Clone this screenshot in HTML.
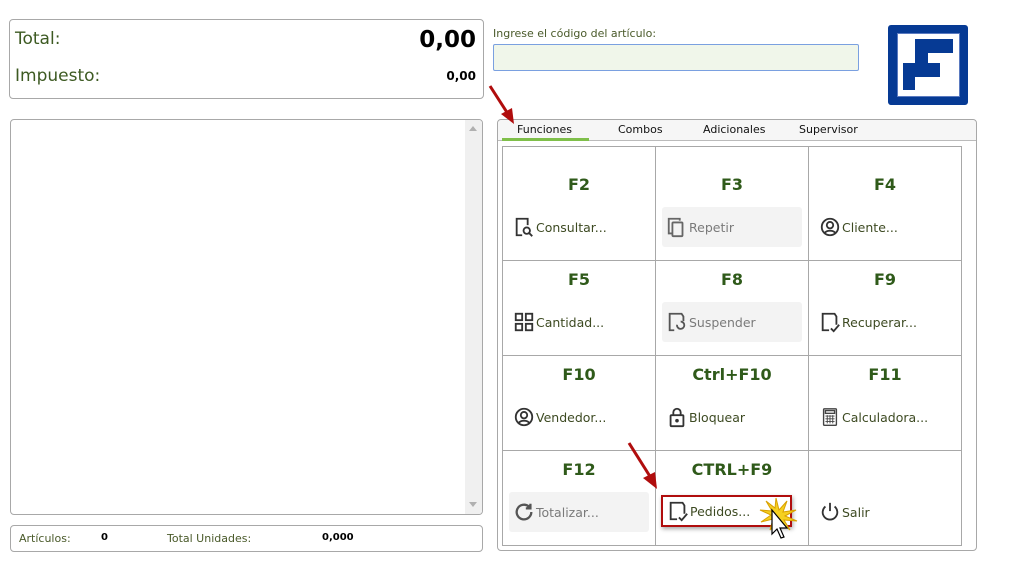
<!DOCTYPE html>
<html><head><meta charset="utf-8"><style>
*{box-sizing:border-box;margin:0;padding:0}
body{width:1024px;height:583px;background:#fff;font-family:"DejaVu Sans","Liberation Sans",sans-serif;position:relative;overflow:hidden;color:#3d4f22}
.a{position:absolute}
.box{border:1px solid #a8a8a8;border-radius:4px;background:#fff}
.fk{position:absolute;left:0;right:0;text-align:center;font-family:"DejaVu Sans",sans-serif;font-weight:bold;font-size:16px;color:#2f5a1a}
.btn{position:absolute;left:6px;right:6px;height:40px;border-radius:3px;display:flex;align-items:center;padding-left:4px;font-size:12.5px;color:#3d4a22}
.btn svg{width:22px;height:22px;margin-right:1px;flex:none}
.dis{background:#f3f3f3;color:#7a7a7a}
.cell{position:absolute;border-right:1px solid #a8a8a8;border-bottom:1px solid #a8a8a8}
</style></head><body>
<div class="a box" style="left:9px;top:19px;width:475px;height:80px"></div>
<div class="a" style="left:15px;top:29px;font-size:17px;color:#3d5a22">Total:</div>
<div class="a" style="right:548px;top:27px;font-size:23px;font-weight:bold;color:#000;font-family:'DejaVu Sans',sans-serif">0,00</div>
<div class="a" style="left:15px;top:66px;font-size:17px;color:#3d5a22">Impuesto:</div>
<div class="a" style="right:548px;top:69px;font-size:12px;font-weight:bold;color:#000">0,00</div>
<div class="a box" style="left:10px;top:119px;width:473px;height:396px;overflow:hidden">
<div class="a" style="right:0;top:0;width:17px;height:100%;background:#f0f0f0"></div>
<div class="a" style="right:5px;top:6px;width:0;height:0;border-left:4px solid transparent;border-right:4px solid transparent;border-bottom:5px solid #b0b0b0"></div>
<div class="a" style="right:5px;bottom:7px;width:0;height:0;border-left:4px solid transparent;border-right:4px solid transparent;border-top:5px solid #b0b0b0"></div>
</div>
<div class="a box" style="left:10px;top:525px;width:473px;height:27px"></div>
<div class="a" style="left:19px;top:532px;font-size:11px;color:#4a5a2a">Artículos:</div>
<div class="a" style="left:101px;top:532px;font-size:10px;font-weight:bold;color:#000">0</div>
<div class="a" style="left:167px;top:532px;font-size:11px;color:#4a5a2a">Total Unidades:</div>
<div class="a" style="left:322px;top:532px;font-size:10px;font-weight:bold;color:#000">0,000</div>
<div class="a" style="left:493px;top:27px;font-size:11px;color:#4a5a2a">Ingrese el código del artículo:</div>
<div class="a" style="left:493px;top:44px;width:366px;height:27px;background:#f0f6ea;border:1px solid #7aa0e0;border-radius:2px"></div>
<div class="a" style="left:888px;top:25px;width:80px;height:80px;background:#063a94;border-radius:3px"></div>
<div class="a" style="left:897px;top:33px;width:63px;height:64px;background:#fff;border:1px solid #5a7ac0"></div>
<div class="a" style="left:915px;top:39px;width:38px;height:14px;background:#063a94"></div>
<div class="a" style="left:915px;top:39px;width:13px;height:25px;background:#063a94"></div>
<div class="a" style="left:903px;top:63px;width:37px;height:14px;background:#063a94"></div>
<div class="a" style="left:903px;top:63px;width:12px;height:27px;background:#063a94"></div>
<div class="a box" style="left:497px;top:119px;width:480px;height:432px;background:#fff"></div>
<div class="a" style="left:498px;top:120px;width:478px;height:21px;background:#f6f6f6;border-bottom:1px solid #bbb;border-radius:4px 4px 0 0"></div>
<div class="a" style="left:502px;top:138px;width:87px;height:3px;background:#7fbf4a"></div>
<div class="a" style="left:517px;top:123px;font-size:11px;color:#111">Funciones</div>
<div class="a" style="left:618px;top:123px;font-size:11px;color:#111">Combos</div>
<div class="a" style="left:703px;top:123px;font-size:11px;color:#111">Adicionales</div>
<div class="a" style="left:799px;top:123px;font-size:11px;color:#111">Supervisor</div>
<div class="a" style="left:502px;top:146px;width:460px;height:400px;border-left:1px solid #a8a8a8;border-top:1px solid #a8a8a8"></div>

<div class="cell" style="left:503px;top:147px;width:153px;height:114px"><div class="fk" style="top:28px">F2</div>
<div class="btn" style="top:60px"><svg viewBox="0 0 24 24" fill="none" stroke="#333" stroke-width="2"><path d="M10 21H4V3h12v7"/><circle cx="15" cy="16" r="3.5"/><path d="M17.5 18.5L21 22"/></svg>Consultar...</div></div>
<div class="cell" style="left:656px;top:147px;width:153px;height:114px"><div class="fk" style="top:28px">F3</div>
<div class="btn dis" style="top:60px"><svg viewBox="0 0 24 24" fill="none" stroke="#666" stroke-width="2"><path d="M6 19H3V3h12v2"/><rect x="7" y="7" width="11" height="15" rx="1"/></svg>Repetir</div></div>
<div class="cell" style="left:809px;top:147px;width:153px;height:114px"><div class="fk" style="top:28px">F4</div>
<div class="btn" style="top:60px"><svg viewBox="0 0 24 24" fill="none" stroke="#333" stroke-width="2"><circle cx="12" cy="12" r="9"/><circle cx="12" cy="10" r="3.5"/><path d="M6 19c2-4 10-4 12 0"/></svg>Cliente...</div></div>
<div class="cell" style="left:503px;top:261px;width:153px;height:95px"><div class="fk" style="top:9px">F5</div>
<div class="btn" style="top:41px"><svg viewBox="0 0 24 24" fill="none" stroke="#333" stroke-width="2"><rect x="3" y="3" width="7" height="7"/><rect x="14" y="3" width="7" height="7"/><rect x="3" y="14" width="7" height="7"/><rect x="14" y="14" width="7" height="7"/></svg>Cantidad...</div></div>
<div class="cell" style="left:656px;top:261px;width:153px;height:95px"><div class="fk" style="top:9px">F8</div>
<div class="btn dis" style="top:41px"><svg viewBox="0 0 24 24" fill="none" stroke="#555" stroke-width="2"><path d="M9 21H4V3h13l2 3v5"/><path d="M12 15a4 4 0 1 0 4-3.5"/></svg>Suspender</div></div>
<div class="cell" style="left:809px;top:261px;width:153px;height:95px"><div class="fk" style="top:9px">F9</div>
<div class="btn" style="top:41px"><svg viewBox="0 0 24 24" fill="none" stroke="#333" stroke-width="2"><path d="M11 21H4V3h13l2 3v9"/><path d="M13 19l3 3 6-7"/></svg>Recuperar...</div></div>
<div class="cell" style="left:503px;top:356px;width:153px;height:95px"><div class="fk" style="top:9px">F10</div>
<div class="btn" style="top:41px"><svg viewBox="0 0 24 24" fill="none" stroke="#333" stroke-width="2"><circle cx="12" cy="12" r="9"/><circle cx="12" cy="10" r="3.5"/><path d="M6 19c2-4 10-4 12 0"/></svg>Vendedor...</div></div>
<div class="cell" style="left:656px;top:356px;width:153px;height:95px"><div class="fk" style="top:9px">Ctrl+F10</div>
<div class="btn" style="top:41px"><svg viewBox="0 0 24 24" fill="none" stroke="#333" stroke-width="2"><rect x="5" y="10" width="14" height="12" rx="1"/><path d="M8 10V7a4 4 0 0 1 8 0v3"/><circle cx="12" cy="16" r="1" fill="#333"/></svg>Bloquear</div></div>
<div class="cell" style="left:809px;top:356px;width:153px;height:95px"><div class="fk" style="top:9px">F11</div>
<div class="btn" style="top:41px"><svg viewBox="0 0 24 24" fill="none" stroke="#444" stroke-width="1.5"><rect x="5" y="3" width="14" height="18" rx="1"/><rect x="7" y="5" width="10" height="3"/><path d="M7 11h10M7 14h10M7 17h10M9 10v9M12 10v9M15 10v9" stroke-width="1"/></svg>Calculadora...</div></div>
<div class="cell" style="left:503px;top:451px;width:153px;height:95px"><div class="fk" style="top:9px">F12</div>
<div class="btn dis" style="top:41px"><svg viewBox="0 0 24 24" fill="none" stroke="#555" stroke-width="2.5"><path d="M20 12a8 8 0 1 1-3-6.2"/><path d="M19 3v5h-5" fill="#555"/></svg>Totalizar...</div></div>
<div class="cell" style="left:656px;top:451px;width:153px;height:95px"><div class="fk" style="top:9px">CTRL+F9</div>
<div class="btn" style="top:44px;left:5px;right:16px;height:32px;border:2px solid #b00d0d;border-radius:0;box-shadow:1px 2px 4px rgba(0,0,0,.35)"><svg viewBox="0 0 24 24" fill="none" stroke="#333" stroke-width="2"><path d="M11 21H4V3h13l2 3v9"/><path d="M13 19l3 3 6-7"/></svg>Pedidos...</div></div>
<div class="cell" style="left:809px;top:451px;width:153px;height:95px">
<div class="btn" style="top:41px"><svg viewBox="0 0 24 24" fill="none" stroke="#333" stroke-width="2"><path d="M7 6a8 8 0 1 0 10 0"/><path d="M12 2v9"/></svg>Salir</div></div>
<svg class="a" style="left:756px;top:496px" width="44" height="46" viewBox="0 0 44 46">
<path d="M20 2l3 12 8-9-4 11 13-2-11 6 12 5-13-1 6 10-9-8-1 12-3-12-7 8 3-11-12 3 10-7-11-5 12 1-6-10 9 7z" fill="#f5d020" stroke="#d9a000" stroke-width="1"/>
<path d="M16 14v24l5-5 4 9 3-1-4-9h7z" fill="#fff" stroke="#000" stroke-width="1.2"/>
</svg>
<svg class="a" style="left:486px;top:84px" width="34" height="42" viewBox="0 0 34 42"><path d="M4 2L22 30" stroke="#b00d0d" stroke-width="3"/><path d="M15 30l13 10-2-16z" fill="#b00d0d"/></svg>
<svg class="a" style="left:624px;top:440px" width="40" height="52" viewBox="0 0 40 52"><path d="M5 3L27 38" stroke="#b00d0d" stroke-width="3"/><path d="M19 38l14 11-2-17z" fill="#b00d0d"/></svg>
</body></html>
